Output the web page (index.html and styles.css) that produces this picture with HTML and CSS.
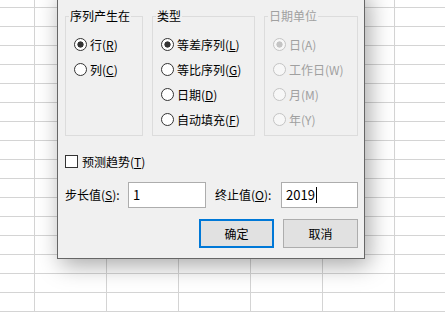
FILE: index.html
```html
<!DOCTYPE html>
<html lang="zh-CN">
<head>
<meta charset="utf-8">
<title>序列</title>
<link rel="stylesheet" href="styles.css">
</head>
<body>
<div class="sheet">
  <div class="dialog">
    <div class="groups">
      <div class="group g1">
        <span class="legend">序列产生在</span>
        <label class="opt"><span class="radio checked"></span>行(<u>R</u>)</label>
        <label class="opt"><span class="radio"></span>列(<u>C</u>)</label>
      </div>
      <div class="group g2">
        <span class="legend">类型</span>
        <label class="opt"><span class="radio checked"></span>等差序列(<u>L</u>)</label>
        <label class="opt"><span class="radio"></span>等比序列(<u>G</u>)</label>
        <label class="opt"><span class="radio"></span>日期(<u>D</u>)</label>
        <label class="opt"><span class="radio"></span>自动填充(<u>F</u>)</label>
      </div>
      <div class="group g3 disabled">
        <span class="legend">日期单位</span>
        <label class="opt"><span class="radio checked"></span>日(A)</label>
        <label class="opt"><span class="radio"></span>工作日(W)</label>
        <label class="opt"><span class="radio"></span>月(M)</label>
        <label class="opt"><span class="radio"></span>年(Y)</label>
      </div>
    </div>
    <label class="check-row"><span class="checkbox"></span>预测趋势(<u>T</u>)</label>
    <div class="field-row">
      <span class="field-label l1">步长值(<u>S</u>):</span>
      <div class="field f1">1</div>
      <span class="field-label l2">终止值(<u>O</u>):</span>
      <div class="field f2">2019<span class="caret"></span></div>
    </div>
    <div class="buttons">
      <button class="btn default">确定</button>
      <button class="btn">取消</button>
    </div>
  </div>
</div>
</body>
</html>
```
FILE: styles.css
```css
html, body {
  margin: 0;
  padding: 0;
}
body {
  width: 445px;
  height: 312px;
  overflow: hidden;
  font-family: "Noto Sans CJK SC", "Noto Sans", sans-serif;
  font-size: 12px;
  color: #000;
}
.sheet {
  position: relative;
  width: 445px;
  height: 312px;
  background-color: #fff;
  background-image:
    linear-gradient(to right, #d4d4d4 1px, transparent 1px),
    linear-gradient(to bottom, #d4d4d4 1px, transparent 1px);
  background-size: 72px 100%, 100% 19px;
  background-position: 34px 0, 0 7px;
}
.dialog {
  position: absolute;
  left: 57px;
  top: -10px;
  width: 308px;
  box-sizing: border-box;
  border: 1px solid #666;
  background: #f0f0f0;
  padding: 25px 6px 10px 7px;
  box-shadow: 4px 6px 22px rgba(0, 0, 0, 0.35);
}
.groups {
  display: flex;
  gap: 9px;
}
.group {
  position: relative;
  box-sizing: border-box;
  height: 120px;
  border: 1px solid #dcdcdc;
  padding: 15px 0 0 8px;
}
.g1 { width: 78px; }
.g2 { width: 103px; }
.g3 { width: 94px; }
.legend {
  position: absolute;
  top: -9px;
  left: 3px;
  padding: 0 1px;
  line-height: 16px;
  background: #f0f0f0;
  white-space: nowrap;
}
.opt {
  display: flex;
  align-items: center;
  height: 25px;
  white-space: nowrap;
  line-height: 16px;
}
.radio {
  width: 13px;
  height: 13px;
  box-sizing: border-box;
  border: 1px solid #333;
  border-radius: 50%;
  background: #fff;
  margin-right: 3px;
  flex: none;
}
.radio.checked {
  background: radial-gradient(circle, #333 0 2.8px, #fff 3.4px);
}
.disabled {
  color: #a0a0a0;
}
.disabled .legend {
  color: #a0a0a0;
}
.disabled .radio {
  border-color: #c4c4c4;
  background: #f7f7f7;
}
.disabled .radio.checked {
  background: radial-gradient(circle, #c4c4c4 0 2.8px, #f7f7f7 3.4px);
}
.check-row {
  display: flex;
  align-items: center;
  height: 25px;
  margin-top: 13px;
  line-height: 16px;
}
.checkbox {
  width: 13px;
  height: 13px;
  box-sizing: border-box;
  border: 1px solid #333;
  background: #fff;
  margin-right: 4px;
  flex: none;
}
.field-row {
  display: flex;
  align-items: center;
  height: 26px;
  margin-top: 8px;
  line-height: 16px;
}
.field-label {
  white-space: nowrap;
}
.l1 { width: 63px; }
.l2 { width: 66px; margin-left: 9px; }
.field {
  box-sizing: border-box;
  height: 26px;
  border: 1px solid #adadad;
  background: #fff;
  padding: 0 4px;
  display: flex;
  align-items: center;
  font-size: 13px;
}
.f1 { width: 78px; }
.f2 { width: 77px; }
.caret {
  display: inline-block;
  width: 1px;
  height: 16px;
  background: #000;
  margin-left: 1px;
}
.buttons {
  display: flex;
  justify-content: flex-end;
  gap: 9px;
  margin-top: 11px;
}
.btn {
  box-sizing: border-box;
  width: 75px;
  height: 29px;
  margin: 0;
  padding: 0;
  border: 1px solid #adadad;
  background: #e1e1e1;
  font-family: inherit;
  font-size: 12px;
  color: #000;
  line-height: 16px;
}
.btn.default {
  border: 2px solid #0078d7;
}
```
